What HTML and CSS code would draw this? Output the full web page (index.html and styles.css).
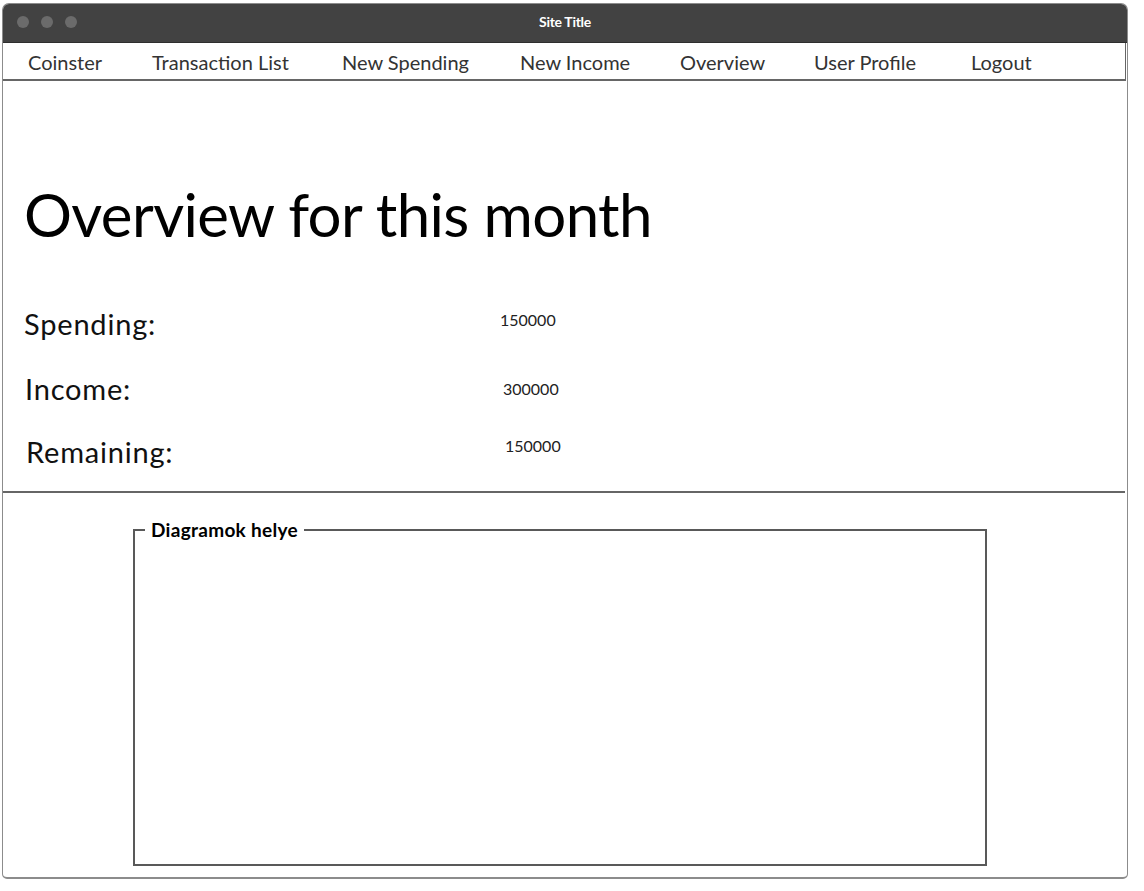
FILE: index.html
```html
<!DOCTYPE html>
<html lang="en">
<head>
<meta charset="utf-8">
<title>Coinster – Overview</title>
<link rel="stylesheet" href="styles.css">
</head>
<body>
<div class="window">
  <div class="titlebar">
    <div class="dots"><span></span><span></span><span></span></div>
    <div class="site-title">Site Title</div>
  </div>
  <nav class="nav">
    <a>Coinster</a>
    <a>Transaction List</a>
    <a>New Spending</a>
    <a>New Income</a>
    <a>Overview</a>
    <a>User Profile</a>
    <a>Logout</a>
  </nav>
  <section class="summary">
    <h1 class="heading">Overview for this month</h1>
    <div class="row row-spending"><span class="label">Spending:</span><span class="value">150000</span></div>
    <div class="row row-income"><span class="label">Income:</span><span class="value">300000</span></div>
    <div class="row row-remaining"><span class="label">Remaining:</span><span class="value">150000</span></div>
  </section>
  <div class="divider"></div>
  <section class="charts">
    <fieldset class="chart-box">
      <legend>Diagramok helye</legend>
    </fieldset>
  </section>
</div>
</body>
</html>
```

FILE: styles.css
```css
* { box-sizing: border-box; }
html, body { margin: 0; padding: 0; background: #fff; }
body { font-family: Lato, "Open Sans", sans-serif; color: #111; }

.window {
  margin: 3px 0 0 2px;
  width: 1126px;
  height: 876px;
  border: 1px solid #8c8c8c;
  border-bottom-width: 2px;
  border-radius: 7px 7px 5px 5px;
  overflow: hidden;
  background: #fff;
}

.titlebar {
  height: 39px;
  background: #424242;
  border-bottom: 1px solid #2e2e2e;
  display: flex;
  align-items: center;
  padding-bottom: 3px;
  position: relative;
}
.dots { display: flex; gap: 12px; padding-left: 14px; }
.dots span {
  width: 12px; height: 12px; border-radius: 50%;
  background: #6b6b6b;
}
.site-title {
  position: absolute; left: 0; right: 0; top: 0; bottom: 3px;
  display: flex; align-items: center; justify-content: center;
  color: #fff; font-weight: 700; font-size: 14px; letter-spacing: -0.3px;
}

.nav {
  height: 38px;
  margin-right: 1px;
  border-right: 1px solid #666;
  border-bottom: 2px solid #666;
  display: grid;
  grid-template-columns: 124px 190px 178px 160px 134px 157px 1fr;
  align-items: center;
  padding-left: 25px;
  padding-top: 1px;
  font-size: 20px;
  color: #333;
}
.nav a { white-space: nowrap; }

.summary { padding: 97px 0 0 21px; }
.heading {
  margin: 0;
  font-weight: 400;
  font-size: 60px;
  line-height: 72px;
  color: #000;
  letter-spacing: -0.6px;
}
.row {
  display: grid;
  grid-template-columns: 476px auto;
  align-items: start;
  height: 34px;
}
.label { font-size: 29px; line-height: 34px; color: #111; letter-spacing: 0.8px; }
.value { font-size: 16px; line-height: 20px; color: #222; }
.row-spending { margin-top: 57px; }
.row-spending .value { margin-top: 3px; }
.row-income { margin-top: 31px; padding-left: 1px; }
.row-income .value { margin-top: 7px; padding-left: 2px; }
.row-remaining { margin-top: 29px; padding-left: 2px; }
.row-remaining .value { margin-top: 1px; padding-left: 3px; }

.divider {
  margin-top: 22px;
  height: 2px;
  margin-right: 2px;
  background: #666;
}

.charts { padding: 26px 0 0 130px; }
.chart-box {
  margin: 0;
  padding: 0;
  width: 854px;
  height: 347px;
  border: 2px solid #595959;
}
.chart-box legend {
  margin-left: 10px;
  padding: 0 6px;
  font-weight: 700;
  font-size: 19px;
  line-height: 22px;
  letter-spacing: 0.3px;
  color: #000;
}
```
